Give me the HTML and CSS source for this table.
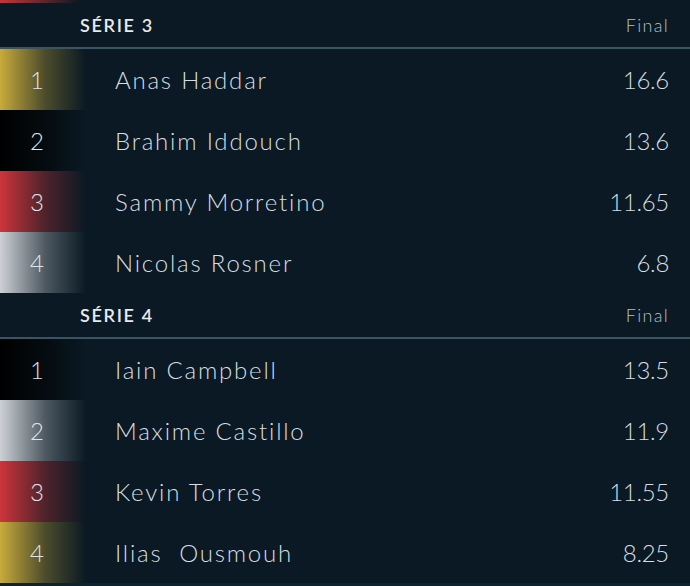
FILE: index.html
```html
<!DOCTYPE html>
<html lang="fr">
<head>
<meta charset="utf-8">
<title>Résultats</title>
<link rel="stylesheet" href="styles.css">
</head>
<body>
<div class="board">
  <div class="tail tail-red"></div>

  <section class="serie">
    <div class="serie-head">
      <span class="serie-title">SÉRIE 3</span>
      <span class="serie-status">Final</span>
    </div>
    <div class="row gold"><span class="rank">1</span><span class="name">Anas Haddar</span><span class="score">16.6</span></div>
    <div class="row black"><span class="rank">2</span><span class="name">Brahim Iddouch</span><span class="score">13.6</span></div>
    <div class="row red"><span class="rank">3</span><span class="name">Sammy Morretino</span><span class="score">11.65</span></div>
    <div class="row white"><span class="rank">4</span><span class="name">Nicolas Rosner</span><span class="score">6.8</span></div>
  </section>

  <section class="serie">
    <div class="serie-head">
      <span class="serie-title">SÉRIE 4</span>
      <span class="serie-status">Final</span>
    </div>
    <div class="row black"><span class="rank">1</span><span class="name">Iain Campbell</span><span class="score">13.5</span></div>
    <div class="row white"><span class="rank">2</span><span class="name">Maxime Castillo</span><span class="score">11.9</span></div>
    <div class="row red"><span class="rank">3</span><span class="name">Kevin Torres</span><span class="score">11.55</span></div>
    <div class="row gold"><span class="rank">4</span><span class="name">Ilias&nbsp; Ousmouh</span><span class="score">8.25</span></div>
  </section>

  <div class="next-head"></div>
</div>
</body>
</html>
```

FILE: styles.css
```css
html, body {
  margin: 0;
  padding: 0;
  background: #0a1923;
}

body {
  font-family: "Lato", "Open Sans", sans-serif;
  color: #d3dbdf;
  overflow: hidden;
}

.board {
  display: flex;
  flex-direction: column;
}

.tail {
  height: 3px;
}

.tail-red {
  background: linear-gradient(to right, #c8343a 0, rgba(200, 52, 58, 0) 80px);
}

.serie {
  display: flex;
  flex-direction: column;
}

.serie-head {
  height: 44px;
  display: flex;
  align-items: center;
  justify-content: space-between;
  padding: 0 21px 0 80px;
  border-bottom: 2px solid #3a5561;
}

.serie-title {
  font-size: 18px;
  font-weight: 600;
  color: #e6ebee;
  letter-spacing: 1.7px;
}

.serie-status {
  font-size: 18px;
  font-weight: 300;
  color: #b4c0c6;
  letter-spacing: 1.3px;
}

.row {
  height: 61px;
  display: grid;
  grid-template-columns: 74px 1fr auto;
  align-items: center;
  padding-right: 21px;
  font-size: 24px;
  font-weight: 300;
}

.rank {
  text-align: center;
  color: #dfe4e7;
}

.name {
  padding-left: 41px;
  color: #d6dee2;
  letter-spacing: 1.8px;
}

.score {
  text-align: right;
  color: #d6dee2;
  letter-spacing: -0.3px;
}

.gold  { background: linear-gradient(to right, #c9ab3b 0, rgba(201, 171, 59, 0.35) 45px, rgba(201, 171, 59, 0) 86px); }
.black { background: linear-gradient(to right, #000000 0, rgba(0, 0, 0, 0.55) 45px, rgba(0, 0, 0, 0) 86px); }
.red   { background: linear-gradient(to right, #cc353b 0, rgba(204, 53, 59, 0.35) 45px, rgba(204, 53, 59, 0) 86px); }
.white { background: linear-gradient(to right, #cdd1d6 0, rgba(205, 209, 214, 0.35) 45px, rgba(205, 209, 214, 0) 86px); }

.next-head {
  height: 3px;
  background: #0b2430;
}
```
